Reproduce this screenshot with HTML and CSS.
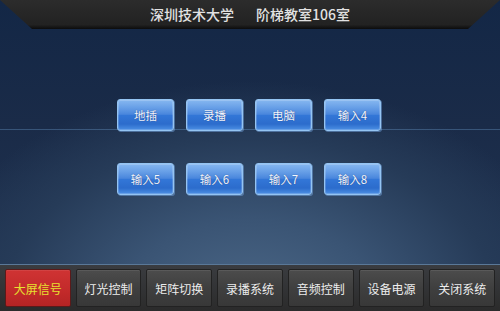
FILE: index.html
```html
<!DOCTYPE html>
<html lang="zh-CN">
<head>
<meta charset="utf-8">
<title>阶梯教室106室</title>
<link rel="stylesheet" href="styles.css">
</head>
<body>
<div class="screen">
  <header class="top">
    <div class="title"><span>深圳技术大学</span><span>阶梯教室106室</span></div>
  </header>
  <main class="stage">
    <div class="grid">
      <button class="src">地插</button>
      <button class="src">录播</button>
      <button class="src">电脑</button>
      <button class="src">输入4</button>
      <button class="src">输入5</button>
      <button class="src">输入6</button>
      <button class="src">输入7</button>
      <button class="src">输入8</button>
    </div>
  </main>
  <nav class="bottom">
    <button class="tab active">大屏信号</button>
    <button class="tab">灯光控制</button>
    <button class="tab">矩阵切换</button>
    <button class="tab">录播系统</button>
    <button class="tab">音频控制</button>
    <button class="tab">设备电源</button>
    <button class="tab">关闭系统</button>
  </nav>
</div>
</body>
</html>
```
FILE: styles.css
```css
html, body {
  margin: 0;
  padding: 0;
  width: 500px;
  height: 311px;
  overflow: hidden;
}
body {
  font-family: "Noto Sans CJK SC", "Noto Sans", sans-serif;
  background: #13294b;
}
.screen {
  width: 500px;
  height: 311px;
  display: flex;
  flex-direction: column;
  background:
    radial-gradient(ellipse 330px 230px at 50% 100%, #4d6988 0%, #3a5474 40%, #263b58 75%, rgba(25,42,70,0) 100%),
    linear-gradient(to bottom, #132746 0%, #1a2b48 40%, #213553 100%);
}
.top {
  height: 29px;
  flex: none;
  background: linear-gradient(to bottom, #2c2c2c 0%, #222 85%, #0c0c0c 100%);
  clip-path: polygon(0 0, 100% 0, calc(100% - 32px) 100%, 32px 100%);
  display: flex;
  justify-content: center;
  align-items: center;
}
.title {
  display: flex;
  gap: 22px;
  color: #e2e2e2;
  font-size: 14px;
  margin-top: -2px;
  font-weight: 500;
}
.stage {
  flex: 1;
  display: flex;
  justify-content: center;
  align-items: center;
  background: linear-gradient(to bottom, transparent 100px, rgba(110,160,210,0.35) 100px, rgba(110,160,210,0.35) 101px, transparent 101px);
}
.grid {
  display: grid;
  grid-template-columns: repeat(4, 57px);
  grid-auto-rows: 32px;
  column-gap: 12px;
  row-gap: 32px;
  margin-left: -2px;
}
.src {
  margin: 0;
  padding: 0;
  font-family: inherit;
  font-size: 11.5px;
  color: #f2f6ff;
  border: 1px solid #94c4f2;
  border-radius: 3px;
  background:
    linear-gradient(to bottom, rgba(255,255,255,0.30) 0%, rgba(255,255,255,0.10) 48%, rgba(255,255,255,0) 50%),
    linear-gradient(to bottom, #5298ea 0%, #3377d8 50%, #2c6ccc 80%, #4d90e4 100%);
  box-shadow: inset 0 0 0 1px rgba(255,255,255,0.18), 1px 1px 0 rgba(120,170,230,0.5);
  text-shadow: 0 0 1px rgba(0,0,40,0.5);
}
.bottom {
  height: 47px;
  flex: none;
  box-sizing: border-box;
  padding: 4px 5px 4px 5px;
  background: linear-gradient(to bottom, #3a3c40 0%, #2b2b2b 100%);
  border-top: 1px solid #5a7898;
  display: grid;
  grid-template-columns: repeat(7, 1fr);
  column-gap: 5px;
}
.tab {
  margin: 0;
  padding: 0;
  font-family: inherit;
  font-size: 12px;
  color: #ececec;
  border: 1px solid #222;
  border-radius: 2px;
  background: linear-gradient(to bottom, #4c4c4c 0%, #3f3f3f 50%, #383838 100%);
  box-shadow: inset 0 1px 0 rgba(255,255,255,0.08);
}
.tab.active {
  background: linear-gradient(to bottom, #cf3333 0%, #c22a2a 60%, #b42424 100%);
  color: #e6e030;
  border-color: #5a1a1a;
}
```
